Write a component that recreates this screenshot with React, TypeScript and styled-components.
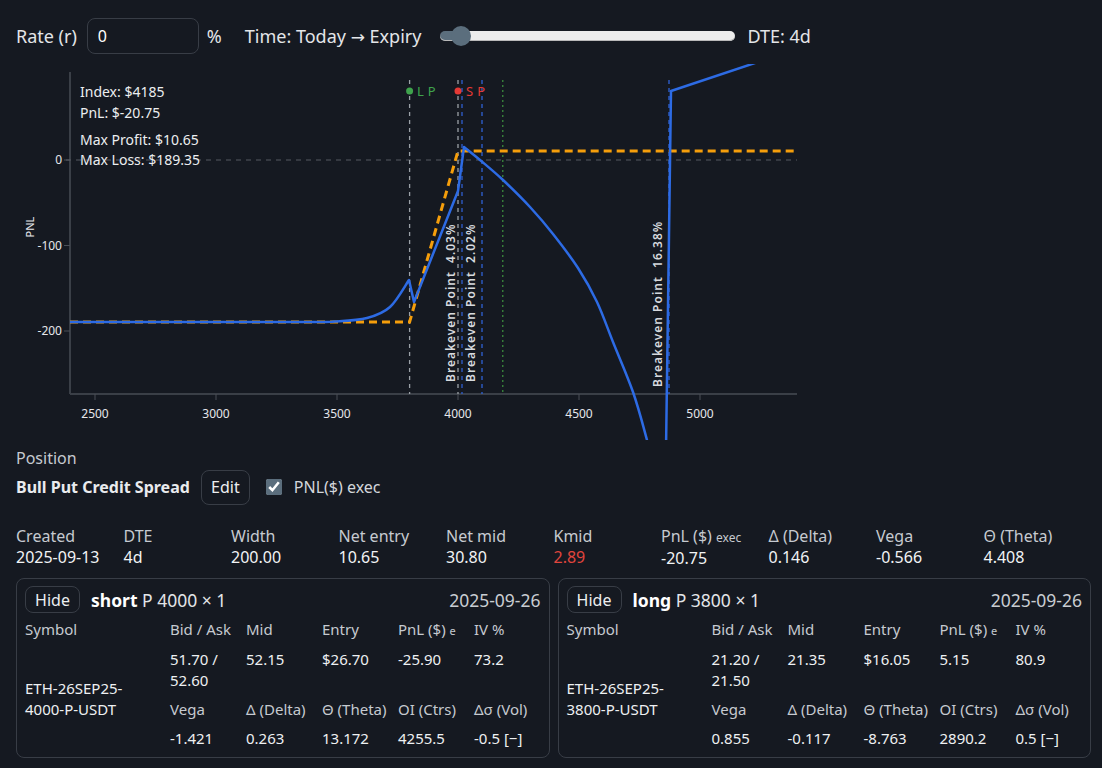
import React from 'react';
import styled, { createGlobalStyle } from 'styled-components';

const GlobalStyle = createGlobalStyle`
  body {
    margin: 0;
    background: #151921;
    color: #e8eaed;
    font-family: "Noto Sans", "Open Sans", sans-serif;
  }
`;

const Page = styled.div`
  padding: 0 11px 0 16px;
`;

const TopBar = styled.div`
  display: flex;
  align-items: center;
  padding-top: 18px;
  height: 36px;
  font-size: 18px;
  color: #e3e5e8;
`;

const BarText = styled.span<{ $ml?: number }>`
  margin-left: ${p => p.$ml || 0}px;
  white-space: nowrap;
`;

const Arrow = styled.span`
  font-family: "DejaVu Sans", sans-serif;
  font-size: 17px;
`;

const RateInput = styled.input`
  box-sizing: border-box;
  width: 112px;
  height: 36px;
  margin-left: 10px;
  padding: 0 0 0 10px;
  border: 1px solid #383d46;
  border-radius: 8px;
  background: transparent;
  color: #ffffff;
  font: 16px "Noto Sans", sans-serif;
  outline: none;
`;

const Range = styled.input`
  -webkit-appearance: none;
  appearance: none;
  width: 295px;
  height: 20px;
  margin: 0 0 0 19px;
  background: transparent;

  &::-webkit-slider-runnable-track {
    height: 10px;
    border-radius: 5px;
    background: linear-gradient(to right, #5b6e7d 0 20px, #ececec 20px);
    box-shadow: inset 0 -1px 0 #b9b9b9;
  }
  &::-webkit-slider-thumb {
    -webkit-appearance: none;
    width: 20px;
    height: 20px;
    border-radius: 50%;
    background: #5b6e7d;
    margin-top: -5px;
  }
`;

const ChartSvg = styled.svg`
  display: block;
  margin-top: 10px;
`;

const Heading = styled.div`
  margin-top: 8px;
  font-size: 16px;
  line-height: 20px;
  color: #c6cad0;
`;

const PositionRow = styled.div`
  display: flex;
  align-items: center;
  height: 36px;
  margin-top: 1px;
`;

const StrategyName = styled.span`
  font-size: 16px;
  font-weight: 700;
  color: #e9ebee;
`;

const GhostButton = styled.button<{ $w: number; $h: number }>`
  box-sizing: border-box;
  width: ${p => p.$w}px;
  height: ${p => p.$h}px;
  padding: 0;
  border: 1px solid #383d46;
  border-radius: 8px;
  background: transparent;
  color: #eceef0;
  font: 16px "Noto Sans", sans-serif;
`;

const EditButton = styled(GhostButton)`
  margin-left: 11px;
`;

const CheckLabel = styled.label`
  display: flex;
  align-items: center;
  margin-left: 16px;
  font-size: 16px;
  color: #d3d6db;

  input {
    width: 16px;
    height: 16px;
    margin: 0 12px 0 0;
    accent-color: #5b6e7d;
  }
`;

const Stats = styled.div`
  display: grid;
  grid-template-columns: repeat(10, 1fr);
  margin-top: 21px;
  font-size: 16px;
  line-height: 21px;
`;

const StatLabel = styled.div`
  color: #c6cad0;
`;

const StatValue = styled.div<{ $red?: boolean }>`
  color: ${p => (p.$red ? '#e0453d' : '#f1f3f5')};
`;

const Small = styled.span<{ $size: number }>`
  font-size: ${p => p.$size}px;
`;

const Legs = styled.div`
  display: grid;
  grid-template-columns: 1fr 1fr;
  gap: 8px;
  margin-top: 9px;
`;

const Card = styled.div`
  border: 1px solid #383d46;
  border-radius: 8px;
  padding: 7px 8px 4px 8px;
`;

const CardHead = styled.div`
  display: flex;
  align-items: center;
  gap: 11px;
  font-size: 17.5px;
  color: #e3e5e8;

  b {
    color: #ffffff;
  }
`;

const ExpDate = styled.span`
  margin-left: auto;
  color: #c9cdd2;
`;

const LegGrid = styled.div`
  display: grid;
  grid-template-columns: 145px 76px 76px 76px 76px 1fr;
  margin-top: 2px;
  font-size: 15px;
  line-height: 21px;
`;

const Cell = styled.div<{ $head?: boolean }>`
  padding: 4px 0;
  color: ${p => (p.$head ? '#c6cad0' : '#eef0f2')};
`;

const SymbolCell = styled(Cell)`
  grid-column: 1;
  grid-row: 2 / span 3;
  align-self: center;
  max-width: 118px;
`;

type Pt = [number, number];

function smooth(pts: Pt[]): string {
  let d = `M${pts[0][0]},${pts[0][1]}`;
  for (let i = 0; i < pts.length - 1; i++) {
    const p0 = pts[i - 1] || pts[i];
    const p1 = pts[i];
    const p2 = pts[i + 1];
    const p3 = pts[i + 2] || p2;
    const c1x = p1[0] + (p2[0] - p0[0]) / 6;
    const c1y = p1[1] + (p2[1] - p0[1]) / 6;
    const c2x = p2[0] - (p3[0] - p1[0]) / 6;
    const c2y = p2[1] - (p3[1] - p1[1]) / 6;
    d += ` C${c1x.toFixed(1)},${c1y.toFixed(1)} ${c2x.toFixed(1)},${c2y.toFixed(1)} ${p2[0]},${p2[1]}`;
  }
  return d;
}

// page-pixel mapping of the chart scales
const sx = (v: number) => 458 + (v - 4000) * 0.242;
const sy = (p: number) => 160 - p * 0.855;

const PLOT = { l: 70, r: 797, t: 80, b: 394 };

const tail = smooth([
  [70, 322], [300, 322], [335, 321.5], [367, 318], [390, 307], [409, 280],
]);
const fall = smooth([
  [464, 147], [480, 160], [503, 180], [530, 207], [553, 234], [578, 268],
  [597, 302], [613, 342], [633, 392], [647, 440], [652, 462],
]);
const bluePath = `${tail} L414,302 L458,191 L464,147 ${fall.replace('M464,147', '')} M666,450 L671,91 L770,58`;

const vlines = [
  { x: sx(3800), c: '#9aa0a6', d: '4 4' },
  { x: sx(4000), c: '#9aa0a6', d: '4 4' },
  { x: 462, c: '#2f5fd0', d: '4 4' },
  { x: 482, c: '#2f63d6', d: '4 4' },
  { x: sx(4185), c: '#3b8a3e', d: '2 3' },
  { x: 669, c: '#2f63d6', d: '4 4' },
];

const breakevens = [
  { x: 455, y: 382, t: 'Breakeven Point\u00a0\u00a04.03%' },
  { x: 475, y: 382, t: 'Breakeven Point\u00a0\u00a02.02%' },
  { x: 662, y: 387, t: 'Breakeven Point\u00a0\u00a016.38%' },
];

const Chart = () => (
  <ChartSvg width={790} height={376}>
    <g transform="translate(-16,-64)" fontFamily='"Noto Sans", sans-serif'>
      <line x1={PLOT.l} y1={PLOT.t - 8} x2={PLOT.l} y2={PLOT.b} stroke="#3a3f47" strokeWidth={2} />
      <line x1={PLOT.l} y1={PLOT.b} x2={PLOT.r} y2={PLOT.b} stroke="#3a3f47" strokeWidth={2} />
      {[0, -100, -200].map(v => (
        <g key={v}>
          <line x1={64} x2={70} y1={sy(v)} y2={sy(v)} stroke="#4a4f57" />
          <text x={62} y={sy(v) + 4} fontSize={12} fill="#e5e7eb" textAnchor="end">{v}</text>
        </g>
      ))}
      {[2500, 3000, 3500, 4000, 4500, 5000].map(v => (
        <g key={v}>
          <line x1={sx(v)} x2={sx(v)} y1={PLOT.b} y2={PLOT.b + 6} stroke="#4a4f57" />
          <text x={sx(v)} y={418} fontSize={12} fill="#e5e7eb" textAnchor="middle">{v}</text>
        </g>
      ))}
      <text x={34} y={227} fontSize={11} fill="#e5e7eb" textAnchor="middle" transform="rotate(-90 34 227)">PNL</text>
      <line x1={66} x2={PLOT.r} y1={160} y2={160} stroke="#565b63" strokeDasharray="5 5" />
      {vlines.map((l, i) => (
        <line key={i} x1={l.x} x2={l.x} y1={PLOT.t} y2={PLOT.b} stroke={l.c} strokeWidth={1.3} strokeDasharray={l.d} />
      ))}
      <circle cx={sx(3800)} cy={91} r={3.5} fill="#3fa34d" />
      <text x={417} y={96} fontSize={13} fill="#3fa34d" letterSpacing={4}>LP</text>
      <circle cx={sx(4000)} cy={91} r={3.5} fill="#e53935" />
      <text x={466} y={96} fontSize={13} fill="#e53935" letterSpacing={4}>SP</text>
      {breakevens.map((b, i) => (
        <text key={i} x={b.x} y={b.y} fontSize={12} fontWeight={600} fill="#d6d9de" letterSpacing={1}
          transform={`rotate(-90 ${b.x} ${b.y})`}>{b.t}</text>
      ))}
      <path d={`M${PLOT.l},322 L${sx(3800)},322 L${sx(4000)},151 L${PLOT.r},151`} fill="none" stroke="#f59e0b" strokeWidth={3} strokeDasharray="8 5" />
      <path d={bluePath} fill="none" stroke="#2d6be4" strokeWidth={2.5} strokeLinejoin="round" />
      <g fontSize={14} fill="#eceef0">
        <text x={80} y={97}>Index: $4185</text>
        <text x={80} y={118}>PnL: $-20.75</text>
        <text x={80} y={145}>Max Profit: $10.65</text>
        <text x={80} y={165}>Max Loss: $189.35</text>
      </g>
    </g>
  </ChartSvg>
);

type Leg = {
  side: string; strike: string; symbol: string; bid: string; ask: string; mid: string;
  entry: string; pnl: string; iv: string; vega: string; delta: string; theta: string; oi: string; vol: string;
};

const legs: Leg[] = [
  { side: 'short', strike: '4000', symbol: 'ETH-26SEP25-4000-P-USDT', bid: '51.70', ask: '52.60', mid: '52.15',
    entry: '$26.70', pnl: '-25.90', iv: '73.2', vega: '-1.421', delta: '0.263', theta: '13.172', oi: '4255.5', vol: '-0.5 [−]' },
  { side: 'long', strike: '3800', symbol: 'ETH-26SEP25-3800-P-USDT', bid: '21.20', ask: '21.50', mid: '21.35',
    entry: '$16.05', pnl: '5.15', iv: '80.9', vega: '0.855', delta: '-0.117', theta: '-8.763', oi: '2890.2', vol: '0.5 [−]' },
];

const LegCard = ({ leg }: { leg: Leg }) => (
  <Card>
    <CardHead>
      <GhostButton $w={55} $h={27}>Hide</GhostButton>
      <span><b>{leg.side}</b> P {leg.strike} × 1</span>
      <ExpDate>2025-09-26</ExpDate>
    </CardHead>
    <LegGrid>
      <Cell $head>Symbol</Cell>
      <Cell $head>Bid / Ask</Cell>
      <Cell $head>Mid</Cell>
      <Cell $head>Entry</Cell>
      <Cell $head>PnL ($) <Small $size={11}>e</Small></Cell>
      <Cell $head>IV %</Cell>
      <SymbolCell>{leg.symbol}</SymbolCell>
      <Cell>{leg.bid} / {leg.ask}</Cell>
      <Cell>{leg.mid}</Cell>
      <Cell>{leg.entry}</Cell>
      <Cell>{leg.pnl}</Cell>
      <Cell>{leg.iv}</Cell>
      <Cell $head>Vega</Cell>
      <Cell $head>Δ (Delta)</Cell>
      <Cell $head>Θ (Theta)</Cell>
      <Cell $head>OI (Ctrs)</Cell>
      <Cell $head>Δσ (Vol)</Cell>
      <Cell>{leg.vega}</Cell>
      <Cell>{leg.delta}</Cell>
      <Cell>{leg.theta}</Cell>
      <Cell>{leg.oi}</Cell>
      <Cell>{leg.vol}</Cell>
    </LegGrid>
  </Card>
);

const stats: { label: React.ReactNode; value: string; red?: boolean }[] = [
  { label: 'Created', value: '2025-09-13' },
  { label: 'DTE', value: '4d' },
  { label: 'Width', value: '200.00' },
  { label: 'Net entry', value: '10.65' },
  { label: 'Net mid', value: '30.80' },
  { label: 'Kmid', value: '2.89', red: true },
  { label: <>PnL ($) <Small $size={12}>exec</Small></>, value: '-20.75' },
  { label: 'Δ (Delta)', value: '0.146' },
  { label: 'Vega', value: '-0.566' },
  { label: 'Θ (Theta)', value: '4.408' },
];

export default function App() {
  return (
    <Page>
      <GlobalStyle />
      <TopBar>
        <BarText>Rate (r)</BarText>
        <RateInput defaultValue="0" />
        <BarText $ml={8}>%</BarText>
        <BarText $ml={23}>Time: Today <Arrow>→</Arrow> Expiry</BarText>
        <Range type="range" min={0} max={100} defaultValue={4} />
        <BarText $ml={12}>DTE: 4d</BarText>
      </TopBar>
      <Chart />
      <Heading>Position</Heading>
      <PositionRow>
        <StrategyName>Bull Put Credit Spread</StrategyName>
        <EditButton $w={49} $h={35}>Edit</EditButton>
        <CheckLabel>
          <input type="checkbox" defaultChecked />
          PNL($) exec
        </CheckLabel>
      </PositionRow>
      <Stats>
        {stats.map((s, i) => (
          <div key={i}>
            <StatLabel>{s.label}</StatLabel>
            <StatValue $red={s.red}>{s.value}</StatValue>
          </div>
        ))}
      </Stats>
      <Legs>
        {legs.map(l => <LegCard key={l.side} leg={l} />)}
      </Legs>
    </Page>
  );
}
